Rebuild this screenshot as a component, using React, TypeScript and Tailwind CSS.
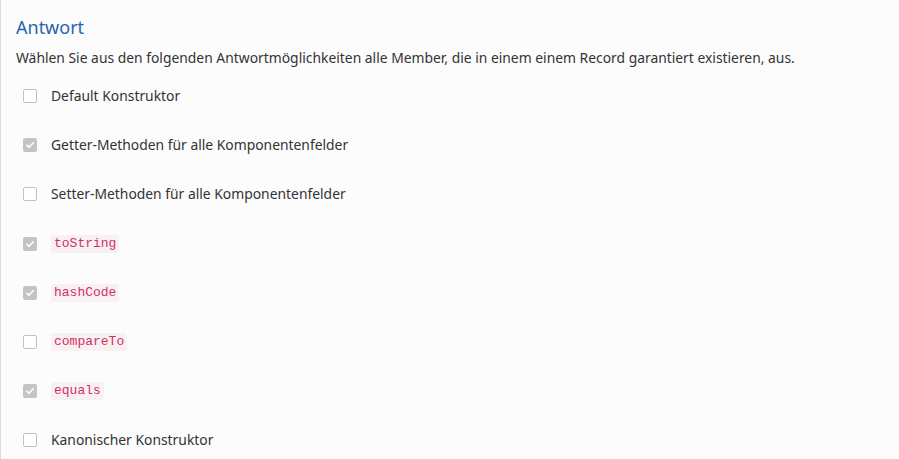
import React from "react";

const items: { label: string; code?: boolean; checked: boolean }[] = [
  { label: "Default Konstruktor", checked: false },
  { label: "Getter-Methoden für alle Komponentenfelder", checked: true },
  { label: "Setter-Methoden für alle Komponentenfelder", checked: false },
  { label: "toString", code: true, checked: true },
  { label: "hashCode", code: true, checked: true },
  { label: "compareTo", code: true, checked: false },
  { label: "equals", code: true, checked: true },
  { label: "Kanonischer Konstruktor", checked: false },
];

function Box({ checked }: { checked: boolean }) {
  if (checked) {
    return (
      <span className="flex h-[14px] w-[14px] items-center justify-center rounded-[2px] bg-[#c3c3c8]">
        <svg width="10" height="10" viewBox="0 0 10 10" fill="none">
          <path d="M1.8 5.2 L4 7.3 L8.3 2.8" stroke="#ffffff" strokeWidth="1.6" strokeLinecap="round" strokeLinejoin="round" />
        </svg>
      </span>
    );
  }
  return <span className="block h-[14px] w-[14px] rounded-[2px] border border-[#c2c2c6] bg-white" />;
}

export default function App() {
  return (
    <div
      className="min-h-[459px] w-[899px] border-l border-[#dcdcdc] bg-[#fcfcfc] pl-[15px] pt-[14px]"
      style={{ fontFamily: '"Noto Sans", "Open Sans", sans-serif' }}
    >
      <h2 className="text-[18px] leading-[26px] text-[#2a64ae]">Antwort</h2>
      <p className="mt-[8px] text-[13.86px] leading-[20px] text-[#333333]">
        Wählen Sie aus den folgenden Antwortmöglichkeiten alle Member, die in einem einem Record garantiert existieren, aus.
      </p>
      <div className="mt-[18px] flex flex-col gap-[29.2px]">
        {items.map((it) => (
          <div key={it.label} className="flex h-[20px] items-center">
            <span className="ml-[7px] mr-[14px]">
              <Box checked={it.checked} />
            </span>
            {it.code ? (
              <code
                className="rounded-[3px] bg-[#f8f1f3] px-[3px] py-[2px] text-[13px] leading-[14px] text-[#d3305f]"
                style={{ fontFamily: '"Liberation Mono", monospace' }}
              >
                {it.label}
              </code>
            ) : (
              <span className="text-[13.86px] text-[#333333]">{it.label}</span>
            )}
          </div>
        ))}
      </div>
    </div>
  );
}
